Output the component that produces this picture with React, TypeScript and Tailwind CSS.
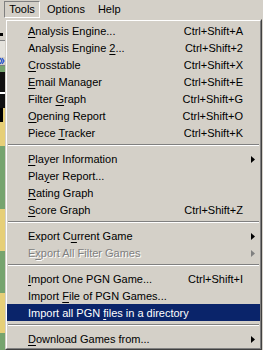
import React from 'react';

type Item =
    | { kind: 'item'; label: string; shortcut?: string; submenu?: boolean; disabled?: boolean; active?: boolean }
    | { kind: 'sep' };

const menu: Item[] = [
    { kind: 'item', label: '&Analysis Engine...', shortcut: 'Ctrl+Shift+A' },
    { kind: 'item', label: 'Analysis Engine &2...', shortcut: 'Ctrl+Shift+2' },
    { kind: 'item', label: '&Crosstable', shortcut: 'Ctrl+Shift+X' },
    { kind: 'item', label: '&Email Manager', shortcut: 'Ctrl+Shift+E' },
    { kind: 'item', label: 'Filter &Graph', shortcut: 'Ctrl+Shift+G' },
    { kind: 'item', label: '&Opening Report', shortcut: 'Ctrl+Shift+O' },
    { kind: 'item', label: 'Piece &Tracker', shortcut: 'Ctrl+Shift+K' },
    { kind: 'sep' },
    { kind: 'item', label: '&Player Information', submenu: true },
    { kind: 'item', label: 'Pla&yer Report...' },
    { kind: 'item', label: '&Rating Graph' },
    { kind: 'item', label: '&Score Graph', shortcut: 'Ctrl+Shift+Z' },
    { kind: 'sep' },
    { kind: 'item', label: 'Export C&urrent Game', submenu: true },
    { kind: 'item', label: 'E&xport All Filter Games', submenu: true, disabled: true },
    { kind: 'sep' },
    { kind: 'item', label: '&Import One PGN Game...', shortcut: 'Ctrl+Shift+I' },
    { kind: 'item', label: 'Import &File of PGN Games...' },
    { kind: 'item', label: 'Import all PGN &files in a directory', active: true },
    { kind: 'sep' },
    { kind: 'item', label: '&Download Games from...', submenu: true },
];

// "&X" marks the mnemonic letter, drawn underlined
const Label = ({ text }: { text: string }) => {
    const i = text.indexOf('&');
    if (i < 0) return <>{text}</>;
    return (
        <>
            {text.slice(0, i)}
            <span className="underline decoration-1 underline-offset-[2px]">{text[i + 1]}</span>
            {text.slice(i + 2)}
        </>
    );
};

const Arrow = ({ color }: { color: string }) => (
    <svg width="4" height="7" viewBox="0 0 4 7" className="block">
        <polygon points="0,0 4,3.5 0,7" fill={color} />
    </svg>
);

const MenuRow = ({ item }: { item: Extract<Item, { kind: 'item' }> }) => {
    const text = item.active ? 'text-white' : item.disabled ? 'text-[#808080]' : 'text-black';
    const shadow = item.disabled ? '[text-shadow:1px_1px_0_#ffffff]' : '';
    return (
        <div className={`flex items-center h-[17px] pl-[21px] pt-[1px] ${item.active ? 'bg-[#0a246a]' : ''} ${text} ${shadow}`}>
            <span className="flex-1 whitespace-nowrap">
                <Label text={item.label} />
            </span>
            {item.shortcut && <span className="whitespace-nowrap">{item.shortcut}</span>}
            <span className="w-[17px] flex justify-end pr-[5px]">
                {item.submenu && (
                    <Arrow color={item.active ? '#ffffff' : item.disabled ? '#808080' : '#000000'} />
                )}
            </span>
        </div>
    );
};

const Separator = () => (
    <div className="h-[9px] flex flex-col pt-[3px] px-[1px]">
        <div className="h-[1px] bg-[#808080]" />
        <div className="h-[1px] bg-white" />
    </div>
);

export default function App() {
    return (
        <div
            className="w-[263px] h-[350px] overflow-hidden bg-[#d4d0c8] text-[11px] leading-none select-none"
            style={{ fontFamily: '"Liberation Sans", Arial, sans-serif' }}
        >
            {/* menubar */}
            <div className="h-[19px] flex items-start pt-[1px] pl-[4px] text-black">
                <div className="h-[17px] w-[36px] flex items-center justify-center border border-t-[#808080] border-l-[#808080] border-b-white border-r-white">
                    Tools
                </div>
                <div className="h-[17px] flex items-center pl-[7px]">Options</div>
                <div className="h-[17px] flex items-center pl-[13px]">Help</div>
            </div>

            <div className="flex h-[331px]">
                {/* sliver of the window behind the menu */}
                <div className="w-[5px] flex flex-col">
                    <div className="h-[14px]" />
                    <div className="h-[3px] w-[3px] bg-black" />
                    <div className="h-[4px]" />
                    <div className="h-[1px] bg-[#808080]" />
                    <div className="h-[16px] bg-[#e4e2dc]" />
                    <div className="h-[8px]">
                        <svg width="5" height="8" viewBox="0 0 5 8" className="block">
                            <polyline points="0,1 2,4 0,7" fill="none" stroke="#1f4fd0" strokeWidth="1.2" />
                            <polyline points="2,1 4,4 2,7" fill="none" stroke="#1f4fd0" strokeWidth="1.2" />
                        </svg>
                    </div>
                    <div className="h-[1px] bg-[#808080]" />
                    <div className="h-[42px] bg-[#111111] flex flex-col">
                        <div className="h-[6px] bg-[#76a46e]" />
                        <div className="h-[20px]" />
                        <div className="h-[2px] bg-white" />
                    </div>
                    <div className="h-[38px] bg-[#e6cf78] flex flex-col">
                        <div className="h-[14px] w-[3px] bg-black" />
                    </div>
                    <div className="h-[63px] bg-[#76a46e]" />
                    <div className="h-[42px] bg-[#e6cf78]" />
                    <div className="h-[42px] bg-[#76a46e]" />
                    <div className="h-[40px] bg-[#e6cf78]" />
                    <div className="flex-1 bg-[#76a46e]" />
                </div>

                {/* dropdown: classic two-tone 3D frame */}
                <div className="w-[257px] border border-t-[#d4d0c8] border-l-[#d4d0c8] border-b-[#404040] border-r-[#404040]">
                    <div className="h-full border border-t-white border-l-white border-b-[#808080] border-r-[#808080] py-[1px]">
                        {menu.map((item, i) =>
                            item.kind === 'sep' ? <Separator key={i} /> : <MenuRow key={i} item={item} />
                        )}
                    </div>
                </div>
            </div>
        </div>
    );
}
